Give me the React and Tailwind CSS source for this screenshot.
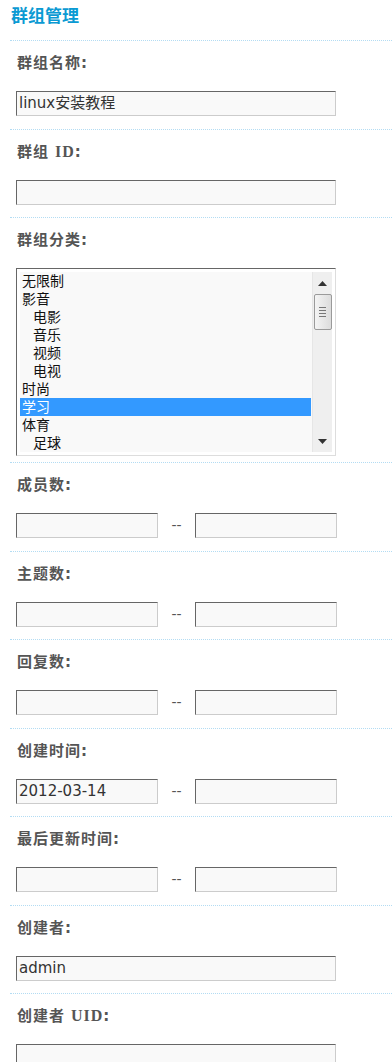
const CJK = '"DejaVu Sans", "Noto Sans CJK SC", sans-serif';

const categories = [
  { name: "无限制", indent: false },
  { name: "影音", indent: false },
  { name: "电影", indent: true },
  { name: "音乐", indent: true },
  { name: "视频", indent: true },
  { name: "电视", indent: true },
  { name: "时尚", indent: false },
  { name: "学习", indent: false, selected: true },
  { name: "体育", indent: false },
  { name: "足球", indent: true },
];

function Label({ text, latin }) {
  return (
    <div className="pl-[7px] pt-[12px] h-[32px] leading-[20px] text-[15px] font-bold tracking-[1px] text-[#555]">
      {text}
      {latin && <span className="ml-[6px] font-['Liberation_Serif'] text-[16px] tracking-[1px] text-[#555]">{latin}</span>}
      <span className="tracking-normal">:</span>
    </div>
  );
}

function TextBox({ value = "", width = "w-[320px]" }) {
  return (
    <div
      className={`${width} h-[25px] bg-[#f9f9f9] border border-t-[#666] border-l-[#666] border-r-[#ccc] border-b-[#ccc] pl-[2px] text-[15px] leading-[23px] text-[#333] overflow-hidden whitespace-nowrap`}
    >
      {value}
    </div>
  );
}

function Section({ children, tight }) {
  return (
    <div className={`border-t border-dotted border-[#b3dcf3] ${tight ? "pb-[6px]" : "pb-[12.5px]"}`}>
      {children}
    </div>
  );
}

function Single({ label, latin, value }) {
  return (
    <Section>
      <Label text={label} latin={latin} />
      <div className="mt-[18px] pl-[6px]">
        <TextBox value={value} />
      </div>
    </Section>
  );
}

function Range({ label, from }) {
  return (
    <Section>
      <Label text={label} />
      <div className="mt-[18px] pl-[6px] flex items-center">
        <TextBox value={from} width="w-[142px]" />
        <span className="w-[37px] text-center text-[14px] text-[#555] leading-[23px]">--</span>
        <TextBox width="w-[142px]" />
      </div>
    </Section>
  );
}

function ScrollBar() {
  return (
    <div className="w-[20px] h-full bg-[#efefef] flex flex-col items-center border-l border-[#e6e6e6]">
      <div className="h-[22px] w-full flex items-center justify-center">
        <svg width="9" height="5" viewBox="0 0 9 5"><path d="M4.5 0L9 5H0z" fill="#333" /></svg>
      </div>
      <div className="w-[18px] h-[36px] rounded-[2px] border border-[#9a9a9a] bg-gradient-to-r from-[#f4f4f4] to-[#dcdcdc] flex flex-col items-center justify-center gap-[2px]">
        <div className="w-[7px] h-px bg-[#777]" />
        <div className="w-[7px] h-px bg-[#777]" />
        <div className="w-[7px] h-px bg-[#777]" />
        <div className="w-[7px] h-px bg-[#777]" />
      </div>
      <div className="flex-1" />
      <div className="h-[22px] w-full flex items-center justify-center">
        <svg width="9" height="5" viewBox="0 0 9 5"><path d="M0 0H9L4.5 5z" fill="#333" /></svg>
      </div>
    </div>
  );
}

function CategoryList() {
  return (
    <Section tight>
      <Label text="群组分类" />
      <div className="mt-[18px] pl-[6px]">
        <div className="w-[320px] h-[188px] bg-white border border-t-[#666] border-l-[#666] border-r-[#ddd] border-b-[#ddd] p-[3px] flex">
          <div className="flex-1 bg-[#f9f9f9] pr-[1px]">
            {categories.map((c) => (
              <div
                key={c.name}
                className={`h-[18px] leading-[18px] text-[14px] ${c.indent ? "pl-[13px]" : "pl-[2px]"} ${
                  c.selected ? "bg-[#3399ff] text-white" : "text-[#111]"
                }`}
              >
                {c.name}
              </div>
            ))}
          </div>
          <ScrollBar />
        </div>
      </div>
    </Section>
  );
}

export default function App() {
  return (
    <div className="w-[392px] min-h-[1062px] bg-white overflow-hidden" style={{ fontFamily: CJK }}>
      <div className="pl-[10px]">
        <div className="h-[40px] pl-px pt-[6px] text-[17px] font-bold leading-[20px] text-[#0b9ad3]">群组管理</div>
        <Single label="群组名称" value="linux安装教程" />
        <Single label="群组" latin="ID" />
        <CategoryList />
        <Range label="成员数" />
        <Range label="主题数" />
        <Range label="回复数" />
        <Range label="创建时间" from="2012-03-14" />
        <Range label="最后更新时间" />
        <Single label="创建者" value="admin" />
        <Single label="创建者" latin="UID" />
      </div>
    </div>
  );
}
